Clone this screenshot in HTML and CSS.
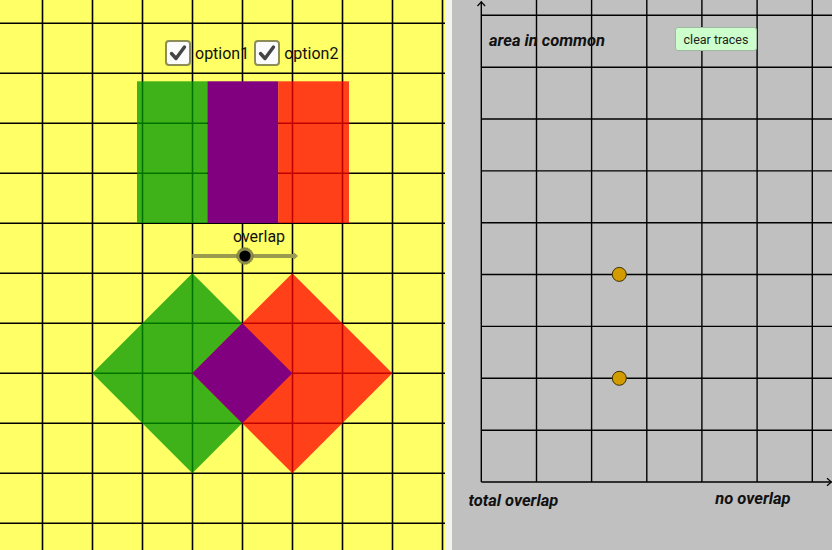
FILE: index.html
```html
<!DOCTYPE html>
<html>
<head>
<meta charset="utf-8">
<link rel="stylesheet" href="styles.css">
</head>
<body>
<div class="app">
  <div class="panel left">
    <svg class="canvas" width="445" height="550" viewBox="0 0 445 550">
      <g class="grid">
        <line x1="42.5" y1="0" x2="42.5" y2="550"/>
        <line x1="92.5" y1="0" x2="92.5" y2="550"/>
        <line x1="142.5" y1="0" x2="142.5" y2="550"/>
        <line x1="192.5" y1="0" x2="192.5" y2="550"/>
        <line x1="242.5" y1="0" x2="242.5" y2="550"/>
        <line x1="292.5" y1="0" x2="292.5" y2="550"/>
        <line x1="342.5" y1="0" x2="342.5" y2="550"/>
        <line x1="392.5" y1="0" x2="392.5" y2="550"/>
        <line x1="442.5" y1="0" x2="442.5" y2="550"/>
        <line x1="0" y1="23.3" x2="445" y2="23.3"/>
        <line x1="0" y1="73.3" x2="445" y2="73.3"/>
        <line x1="0" y1="123.3" x2="445" y2="123.3"/>
        <line x1="0" y1="173.3" x2="445" y2="173.3"/>
        <line x1="0" y1="223.3" x2="445" y2="223.3"/>
        <line x1="0" y1="273.3" x2="445" y2="273.3"/>
        <line x1="0" y1="323.3" x2="445" y2="323.3"/>
        <line x1="0" y1="373.3" x2="445" y2="373.3"/>
        <line x1="0" y1="423.3" x2="445" y2="423.3"/>
        <line x1="0" y1="473.3" x2="445" y2="473.3"/>
        <line x1="0" y1="523.3" x2="445" y2="523.3"/>
      </g>
      <rect class="green" x="137" y="81.3" width="70.3" height="141.7"/>
      <rect class="purple" x="207.3" y="81.3" width="71" height="141.7"/>
      <rect class="red" x="278.3" y="81.3" width="70.7" height="141.7"/>
      <polygon class="green" points="192.3,273.3 292.3,373.3 192.3,473.3 92.3,373.3"/>
      <polygon class="red" points="292.3,273.3 392.3,373.3 292.3,473.3 192.3,373.3"/>
      <polygon class="purple" points="242.3,323.3 292.3,373.3 242.3,423.3 192.3,373.3"/>
      <text class="label" x="259" y="241.5" text-anchor="middle">overlap</text>
      <line class="track" x1="192.3" y1="256" x2="294" y2="256"/>
      <polygon class="track-tip" points="294,252.5 298,256 294,259.5"/>
      <circle class="knob-halo" cx="245" cy="256" r="8.2"/>
      <circle class="knob" cx="245" cy="256" r="5.6"/>
    </svg>
    <div class="checks">
      <label class="check">
        <span class="box"><svg width="22" height="22" viewBox="0 0 22 22"><path d="M4.5 11.5 L9 16.5 L17.5 5" /></svg></span>
        <span class="opt">option1</span>
      </label>
      <label class="check">
        <span class="box"><svg width="22" height="22" viewBox="0 0 22 22"><path d="M4.5 11.5 L9 16.5 L17.5 5" /></svg></span>
        <span class="opt">option2</span>
      </label>
    </div>
  </div>
  <div class="divider"></div>
  <div class="panel right">
    <svg class="canvas" width="380" height="550" viewBox="0 0 380 550">
      <g class="rgrid">
        <line x1="84.5" y1="0" x2="84.5" y2="482"/>
        <line x1="139.6" y1="0" x2="139.6" y2="482"/>
        <line x1="194.8" y1="0" x2="194.8" y2="482"/>
        <line x1="249.9" y1="0" x2="249.9" y2="482"/>
        <line x1="305.1" y1="0" x2="305.1" y2="482"/>
        <line x1="360.3" y1="0" x2="360.3" y2="482"/>
        <line x1="29.3" y1="430.2" x2="380" y2="430.2"/>
        <line x1="29.3" y1="378.3" x2="380" y2="378.3"/>
        <line x1="29.3" y1="326.4" x2="380" y2="326.4"/>
        <line x1="29.3" y1="274.5" x2="380" y2="274.5"/>
        <line x1="29.3" y1="222.7" x2="380" y2="222.7"/>
        <line x1="29.3" y1="170.9" x2="380" y2="170.9"/>
        <line x1="29.3" y1="119" x2="380" y2="119"/>
        <line x1="29.3" y1="67.2" x2="380" y2="67.2"/>
        <line x1="29.3" y1="15.3" x2="380" y2="15.3"/>
        <line x1="29.3" y1="482" x2="379.5" y2="482"/>
        <line x1="29.3" y1="482" x2="29.3" y2="1.5"/>
      </g>
      <polyline class="arrow" points="25.5,6 29.3,1.8 33.1,6"/>
      <polyline class="arrow" points="375,478.3 379.3,482 375,485.7"/>
      <circle class="pt" cx="167.3" cy="274.4" r="7"/>
      <circle class="pt" cx="167.3" cy="378.3" r="7"/>
      <text class="axlabel" x="37" y="45.5">area in common</text>
      <text class="axlabel" x="16.5" y="506">total overlap</text>
      <text class="axlabel" x="263.3" y="504">no overlap</text>
    </svg>
    <button class="clear">clear traces</button>
  </div>
</div>
</body>
</html>
```
FILE: styles.css
```css
html, body {
  margin: 0;
  padding: 0;
  background: #ffffff;
}
.app {
  display: flex;
  width: 834px;
  height: 550px;
  overflow: hidden;
  font-family: Roboto, "Liberation Sans", sans-serif;
}
.panel {
  position: relative;
  height: 550px;
  flex: none;
}
.left {
  width: 445px;
  background: #ffff66;
}
.divider {
  width: 7px;
  flex: none;
  background: #f3f3ef;
}
.right {
  width: 380px;
  background: #c0c0c0;
}
.canvas {
  display: block;
}
.grid line {
  stroke: #000;
  stroke-width: 1.6;
}
.green {
  fill: rgb(0, 152, 0);
  fill-opacity: 0.75;
}
.red {
  fill: rgb(255, 0, 0);
  fill-opacity: 0.75;
}
.purple {
  fill: #800080;
}
.label {
  font-family: Roboto, "Liberation Sans", sans-serif;
  font-size: 16px;
  fill: #111;
}
.track {
  stroke: #9b9b50;
  stroke-width: 4.2;
}
.track-tip {
  fill: #9b9b50;
}
.knob-halo {
  fill: #8c8c4c;
  stroke: #6f6f3a;
  stroke-width: 1;
  stroke-dasharray: 1.5 1;
}
.knob {
  fill: #000;
}
.checks {
  position: absolute;
  left: 165px;
  top: 39px;
  display: flex;
  align-items: center;
  gap: 5px;
}
.check {
  display: flex;
  align-items: center;
  gap: 4px;
}
.box {
  width: 22px;
  height: 22px;
  border: 2px solid #8d8d55;
  border-radius: 4px;
  background: #fbfbfb;
  display: flex;
}
.box path {
  fill: none;
  stroke: #444;
  stroke-width: 3.4;
  stroke-linecap: round;
  stroke-linejoin: round;
}
.opt {
  font-size: 16px;
  color: #111;
  line-height: 26px;
  padding-top: 2px;
}
.rgrid line {
  stroke: #000;
  stroke-width: 1.4;
}
.arrow {
  fill: none;
  stroke: #000;
  stroke-width: 1.2;
}
.pt {
  fill: #d29c00;
  stroke: #3a3000;
  stroke-width: 1;
}
.axlabel {
  font-family: Roboto, "Liberation Sans", sans-serif;
  font-size: 16.5px;
  font-weight: bold;
  font-style: italic;
  fill: #111;
}
.clear {
  position: absolute;
  left: 223px;
  top: 27px;
  width: 82px;
  height: 24px;
  padding: 0;
  margin: 0;
  border: 1px solid #9fb89f;
  border-radius: 3px;
  background: #ccffcc;
  font-family: Roboto, "Liberation Sans", sans-serif;
  font-size: 12.5px;
  color: #222;
  cursor: pointer;
}
```
